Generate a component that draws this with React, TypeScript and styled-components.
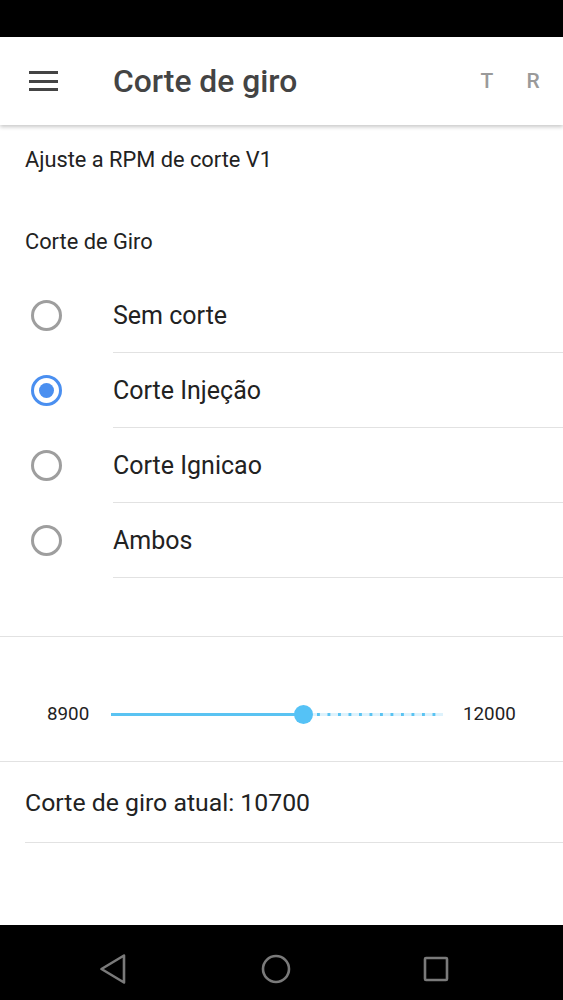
import { useState } from "react";
import styled, { createGlobalStyle } from "styled-components";

const GlobalStyle = createGlobalStyle`
  html, body {
    margin: 0;
    padding: 0;
    background: #ffffff;
    font-family: Roboto, "Noto Sans", Arial, sans-serif;
  }
  * { box-sizing: border-box; }
`;

const Screen = styled.div`
  width: 563px;
  height: 1000px;
  display: flex;
  flex-direction: column;
  overflow: hidden;
  background: #ffffff;
`;

const StatusBar = styled.div`
  height: 37px;
  background: #000000;
  flex-shrink: 0;
`;

const AppBar = styled.header`
  height: 88px;
  flex-shrink: 0;
  display: flex;
  align-items: center;
  padding: 0 0 0 29px;
  background: #ffffff;
  box-shadow: 0 2px 4px rgba(0, 0, 0, 0.22);
  position: relative;
  z-index: 1;
`;

const MenuButton = styled.div`
  width: 29px;
  display: flex;
  flex-direction: column;
  gap: 5.5px;
  margin-right: 55px;
  span {
    display: block;
    height: 3px;
    background: #444444;
  }
`;

const Title = styled.h1`
  margin: 0;
  flex: 1;
  font-size: 31.8px;
  font-weight: 500;
  color: #444444;
`;

const Action = styled.span`
  font-size: 21px;
  font-weight: 500;
  color: #9a9a9a;
  width: 46px;
  text-align: center;
`;

const Actions = styled.div`
  display: flex;
  margin-right: 7px;
`;

const Content = styled.main`
  flex: 1;
  display: flex;
  flex-direction: column;
`;

const Intro = styled.p`
  margin: 0;
  height: 70px;
  line-height: 70px;
  padding-left: 25px;
  font-size: 21.8px;
  color: #222222;
`;

const SectionLabel = styled.p`
  margin: 0;
  padding: 27px 0 16px 25px;
  line-height: 40px;
  font-size: 21.8px;
  color: #222222;
`;

const RadioList = styled.div`
  display: flex;
  flex-direction: column;
`;

const RadioRow = styled.label`
  height: 75px;
  display: flex;
  align-items: center;
  cursor: pointer;
`;

const RadioCircle = styled.span<{ $checked: boolean }>`
  width: 31px;
  height: 31px;
  margin: 0 51px 0 31px;
  border-radius: 50%;
  border: 3px solid ${(p) => (p.$checked ? "#4a8ff0" : "#9e9e9e")};
  display: flex;
  align-items: center;
  justify-content: center;
  flex-shrink: 0;
  &::after {
    content: "";
    width: 15px;
    height: 15px;
    border-radius: 50%;
    background: ${(p) => (p.$checked ? "#4a8ff0" : "transparent")};
  }
`;

const RadioText = styled.span`
  flex: 1;
  align-self: stretch;
  display: flex;
  align-items: center;
  border-bottom: 1.5px solid #e2e2e2;
  font-size: 25px;
  color: #222222;
  padding-top: 1px;
`;

const Spacer = styled.div`
  height: 59px;
  border-bottom: 1.5px solid #e2e2e2;
`;

const SliderSection = styled.div`
  padding: 62px 0 32px;
  border-bottom: 1.5px solid #e2e2e2;
`;

const SliderRow = styled.div`
  height: 30px;
  display: flex;
  align-items: center;
`;

const RangeLabel = styled.span<{ $side: "left" | "right" }>`
  font-size: 18.8px;
  color: #222222;
  width: ${(p) => (p.$side === "left" ? "111px" : "120px")};
  padding-left: ${(p) => (p.$side === "left" ? "47px" : "20px")};
`;

const Track = styled.div`
  position: relative;
  flex: 1;
  height: 3px;
  background-image: linear-gradient(to right, #5ac3f2 0 3px, transparent 3px);
  background-size: 10.5px 3px;
  background-position: right 0 top 0;
  background-color: #ddf2fc;
`;

const Filled = styled.div`
  position: absolute;
  left: 0;
  top: 0;
  height: 3px;
  background: #5ac3f2;
`;

const Thumb = styled.div`
  position: absolute;
  top: 50%;
  width: 19px;
  height: 19px;
  margin: -9.5px 0 0 -9.5px;
  border-radius: 50%;
  background: #55c2f6;
`;

const CurrentRow = styled.div`
  height: 81px;
  margin-left: 25px;
  display: flex;
  align-items: center;
  border-bottom: 1.5px solid #e2e2e2;
  font-size: 24.8px;
  color: #222222;
  padding-top: 1px;
`;

const NavBar = styled.nav`
  height: 75px;
  flex-shrink: 0;
  background: #000000;
  display: flex;
  align-items: center;
  justify-content: space-between;
  padding: 13px 111px 0 99px;
`;

const NavIcon = styled.svg`
  width: 32px;
  height: 32px;
  fill: none;
  stroke: #7a7a7a;
  stroke-width: 2.6;
  stroke-linejoin: round;
`;

const options = ["Sem corte", "Corte Injeção", "Corte Ignicao", "Ambos"];

export default function App() {
  const [selected, setSelected] = useState(1);
  const min = 8900;
  const max = 12000;
  const value = 10700;
  const pct = ((value - min) / (max - min)) * 100;

  return (
    <Screen>
      <GlobalStyle />
      <StatusBar />
      <AppBar>
        <MenuButton>
          <span />
          <span />
          <span />
        </MenuButton>
        <Title>Corte de giro</Title>
        <Actions>
          <Action>T</Action>
          <Action>R</Action>
        </Actions>
      </AppBar>
      <Content>
        <Intro>Ajuste a RPM de corte V1</Intro>
        <SectionLabel>Corte de Giro</SectionLabel>
        <RadioList>
          {options.map((o, i) => (
            <RadioRow key={o} onClick={() => setSelected(i)}>
              <RadioCircle $checked={selected === i} />
              <RadioText>{o}</RadioText>
            </RadioRow>
          ))}
        </RadioList>
        <Spacer />
        <SliderSection>
          <SliderRow>
            <RangeLabel $side="left">{min}</RangeLabel>
            <Track>
              <Filled style={{ width: pct + "%" }} />
              <Thumb style={{ left: pct + "%" }} />
            </Track>
            <RangeLabel $side="right">{max}</RangeLabel>
          </SliderRow>
        </SliderSection>
        <CurrentRow>Corte de giro atual: {value}</CurrentRow>
      </Content>
      <NavBar>
        <NavIcon viewBox="0 0 32 32">
          <path d="M25 2.5 L2.5 16 L25 29.5 Z" />
        </NavIcon>
        <NavIcon viewBox="0 0 32 32">
          <circle cx="16" cy="16" r="13" />
        </NavIcon>
        <NavIcon viewBox="0 0 32 32">
          <rect x="5" y="5" width="22" height="22" rx="1" />
        </NavIcon>
      </NavBar>
    </Screen>
  );
}
